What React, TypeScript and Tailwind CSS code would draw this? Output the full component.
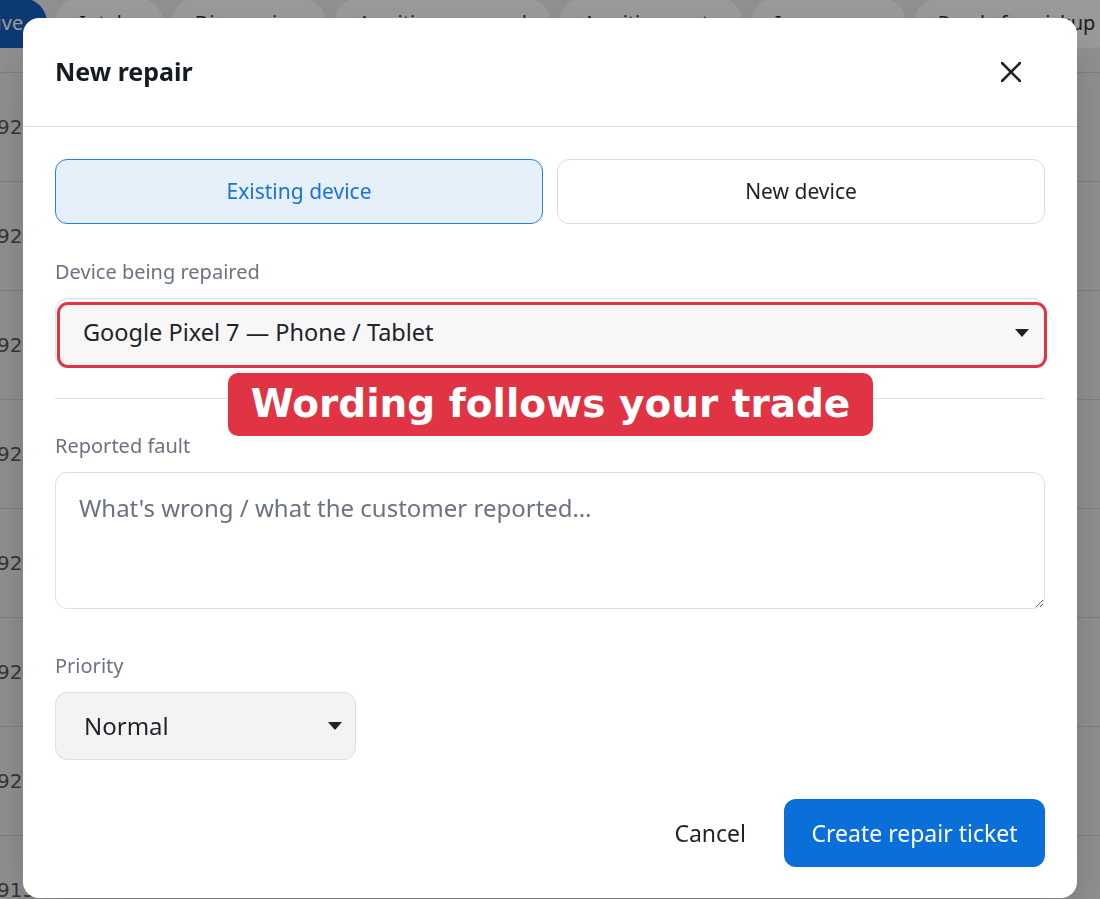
import { useState } from "react";

const tabs = ["Active", "Intake", "Diagnosing", "Awaiting approval", "Awaiting parts", "In progress", "Ready for pickup"];
const ticketNos = ["927", "925", "926", "924", "923", "922", "928", "915"];

const uiFont = { fontFamily: "'Noto Sans', Lato, sans-serif" };

function Caret() {
  return (
    <svg width="14" height="8" viewBox="0 0 14 8" className="shrink-0">
      <path d="M0 0h14L7 8z" fill="#222" />
    </svg>
  );
}

function Backdrop() {
  return (
    <div className="h-screen bg-[#eeeeee] overflow-hidden" style={uiFont}>
      <div className="flex gap-2 -mt-[2px] -ml-[57px] h-[50px]">
        {tabs.map((t, i) => (
          <div
            key={t}
            className={
              "h-[50px] px-6 rounded-full flex items-center text-[20px] whitespace-nowrap " +
              (i === 0 ? "bg-[#1560bd] text-white" : "bg-white text-[#333]")
            }
          >
            {t}
          </div>
        ))}
      </div>
      <div className="mt-[24px] border-t border-[#d3d3d3]">
        {ticketNos.map((n) => (
          <div key={n} className="h-[109px] border-b border-[#d3d3d3] flex items-center -ml-[3px]">
            <span className="text-[20px] text-[#5a5a5a]" style={{ fontFamily: "'DejaVu Sans', sans-serif" }}>
              {n}
            </span>
          </div>
        ))}
      </div>
    </div>
  );
}

export default function App() {
  const [mode, setMode] = useState<"existing" | "new">("existing");

  const segClass = (active: boolean) =>
    "h-[65px] rounded-xl text-[21px] " +
    (active
      ? "bg-[#e6f0fb] border-[1.5px] border-[#2a7fe0] text-[#1a73d9]"
      : "bg-white border border-[#d9dce1] text-[#222]");

  return (
    <div className="relative h-screen overflow-hidden">
      <Backdrop />
      <div className="fixed inset-0 bg-black/40" />

      <div
        className="fixed left-[23px] top-[18px] w-[1054px] h-[880px] rounded-2xl bg-white shadow-2xl text-[#1f2328]"
        style={uiFont}
      >
        <div className="h-[109px] border-b border-[#dde1e6] flex items-center justify-between pl-8 pr-[56px]">
          <h2 className="text-[25px] font-bold text-[#161b22]">New repair</h2>
          <button type="button" aria-label="Close">
            <svg width="20" height="20" viewBox="0 0 20 20">
              <path d="M1 1l18 18M19 1L1 19" stroke="#1f2328" strokeWidth="2.6" strokeLinecap="round" />
            </svg>
          </button>
        </div>

        <div className="px-8 pt-8">
          <div className="grid grid-cols-2 gap-[14px]">
            <button type="button" onClick={() => setMode("existing")} className={segClass(mode === "existing")}>
              Existing device
            </button>
            <button type="button" onClick={() => setMode("new")} className={segClass(mode === "new")}>
              New device
            </button>
          </div>

          <label className="block mt-[34px] leading-[28px] text-[20px] text-[#6b7280]">Device being repaired</label>
          <div className="relative mt-3">
            <div className="h-[70px] rounded-xl border border-[#dcdfe3] bg-[#f7f7f7] flex items-center justify-between pl-[27px] pr-[15px] text-[23.5px] text-[#1f2328]">
              <span>Google Pixel 7 — Phone / Tablet</span>
              <Caret />
            </div>
            <div className="absolute left-[2px] top-[4px] -right-[2px] bottom-0 rounded-[11px] border-[3px] border-[#e03444]" />
          </div>

          <div className="mt-[30px] h-px bg-[#dde1e6]" />

          <label className="block mt-[33px] leading-[28px] text-[20px] text-[#6b7280]">Reported fault</label>
          <textarea
            className="mt-3 block w-full h-[137px] rounded-xl border border-[#dcdfe3] px-[23px] pt-[17px] text-[24px] text-[#1f2328] placeholder:text-[#6b7280] resize-y outline-none"
            placeholder="What's wrong / what the customer reported…"
          />

          <label className="block mt-[43px] leading-[28px] text-[20px] text-[#6b7280]">Priority</label>
          <div className="mt-3 w-[301px] h-[68px] rounded-xl border border-[#dcdfe3] bg-[#f3f3f3] flex items-center justify-between pl-[28px] pr-[13px] text-[24px] text-[#1f2328]">
            <span>Normal</span>
            <Caret />
          </div>

          <div className="mt-[39px] flex items-center justify-end gap-[38px]">
            <button type="button" className="text-[23px] text-[#1f2328]">
              Cancel
            </button>
            <button type="button" className="h-[68px] w-[261px] rounded-xl bg-[#0b6fd9] text-white text-[23px]">
              Create repair ticket
            </button>
          </div>
        </div>

        <div
          className="absolute left-[205px] top-[355px] w-[645px] h-[63px] rounded-[10px] bg-[#e03444] flex items-center justify-center text-white text-[39px] font-bold"
          style={{ fontFamily: "'DejaVu Sans', sans-serif" }}
        >
          Wording follows your trade
        </div>
      </div>
    </div>
  );
}
